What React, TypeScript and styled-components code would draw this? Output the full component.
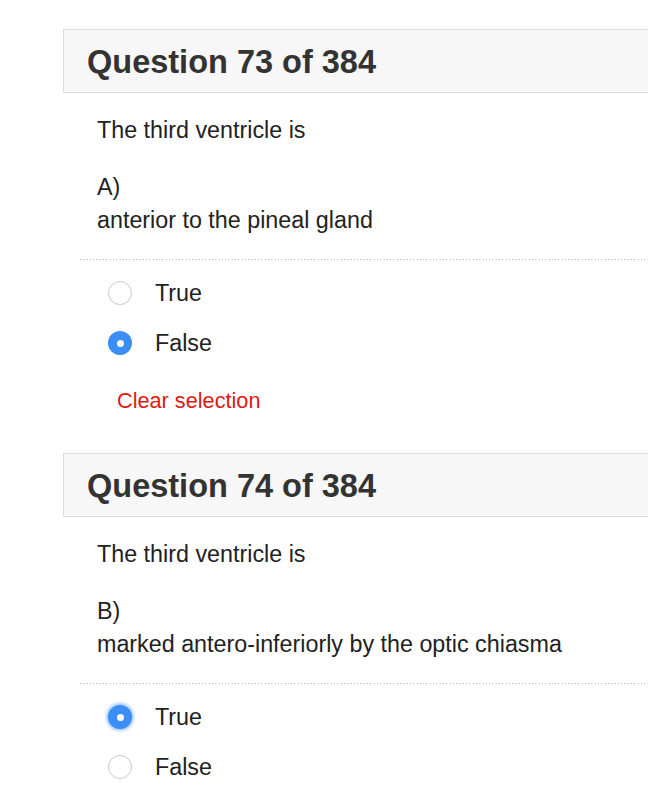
import React from "react";
import styled, { createGlobalStyle } from "styled-components";

const GlobalStyle = createGlobalStyle`
  html, body {
    margin: 0;
    padding: 0;
    background: #ffffff;
    overflow: hidden;
  }
  body {
    font-family: "Liberation Sans", Arial, Helvetica, sans-serif;
    color: #222222;
  }
`;

const Page = styled.div`
  padding: 29px 0 0 63px;
  width: 700px;
`;

const QuestionBlock = styled.section`
  display: flex;
  flex-direction: column;
  margin-bottom: 37px;
`;

const Header = styled.div`
  box-sizing: border-box;
  height: 64px;
  display: flex;
  align-items: center;
  padding: 2px 0 0 23px;
  background: #f7f7f7;
  border: 1px solid #dcdcdc;
  border-right: none;
`;

const Title = styled.h2`
  margin: 0;
  font-size: 32.5px;
  font-weight: 700;
  color: #333333;
`;

const Stem = styled.div`
  padding: 21px 0 0 34px;
  font-size: 23.3px;
  line-height: 33px;
  color: #222222;
`;

const StemLine = styled.p<{ $gapBefore?: number }>`
  margin: ${(p) => p.$gapBefore ?? 0}px 0 0 0;
`;

const Divider = styled.div`
  margin: 22px 0 0 17px;
  height: 1px;
  background: repeating-linear-gradient(
    to right,
    #b4b4b4 0 1px,
    transparent 1px 3.3px
  );
`;

const Options = styled.div`
  display: flex;
  flex-direction: column;
  padding: 8px 0 0 45px;
`;

const OptionRow = styled.label`
  display: flex;
  align-items: center;
  height: 50px;
  gap: 23px;
  font-size: 23.3px;
  color: #222222;
  cursor: pointer;
`;

const Radio = styled.span<{ $checked?: boolean; $focused?: boolean }>`
  box-sizing: border-box;
  width: 24px;
  height: 24px;
  border-radius: 50%;
  flex: none;
  display: flex;
  align-items: center;
  justify-content: center;
  background: ${(p) => (p.$checked ? "#3a8ef6" : "#ffffff")};
  border: ${(p) => (p.$checked ? "none" : "1.5px solid #cacaca")};
  box-shadow: ${(p) =>
    p.$focused ? "0 0 3px 2px rgba(58, 142, 246, 0.45)" : "none"};

  &::after {
    content: "";
    display: ${(p) => (p.$checked ? "block" : "none")};
    width: 7px;
    height: 7px;
    border-radius: 50%;
    background: #ffffff;
  }
`;

const ClearLink = styled.a`
  display: block;
  margin: 18px 0 0 54px;
  font-size: 21.7px;
  line-height: 30px;
  color: #dc1a10;
  text-decoration: none;
  cursor: pointer;
`;

type Q = {
  num: number;
  letter: string;
  statement: string;
  answer: "True" | "False";
  focused?: boolean;
  showClear?: boolean;
};

const questions: Q[] = [
  {
    num: 73,
    letter: "A)",
    statement: "anterior to the pineal gland",
    answer: "False",
    showClear: true,
  },
  {
    num: 74,
    letter: "B)",
    statement: "marked antero-inferiorly by the optic chiasma",
    answer: "True",
    focused: true,
  },
];

export default function App() {
  return (
    <>
      <GlobalStyle />
      <Page>
        {questions.map((q) => (
          <QuestionBlock key={q.num}>
            <Header>
              <Title>Question {q.num} of 384</Title>
            </Header>
            <Stem>
              <StemLine>The third ventricle is</StemLine>
              <StemLine $gapBefore={24}>{q.letter}</StemLine>
              <StemLine>{q.statement}</StemLine>
            </Stem>
            <Divider />
            <Options>
              {(["True", "False"] as const).map((opt) => (
                <OptionRow key={opt}>
                  <Radio
                    $checked={q.answer === opt}
                    $focused={q.answer === opt && q.focused}
                  />
                  {opt}
                </OptionRow>
              ))}
            </Options>
            {q.showClear && <ClearLink>Clear selection</ClearLink>}
          </QuestionBlock>
        ))}
      </Page>
    </>
  );
}
